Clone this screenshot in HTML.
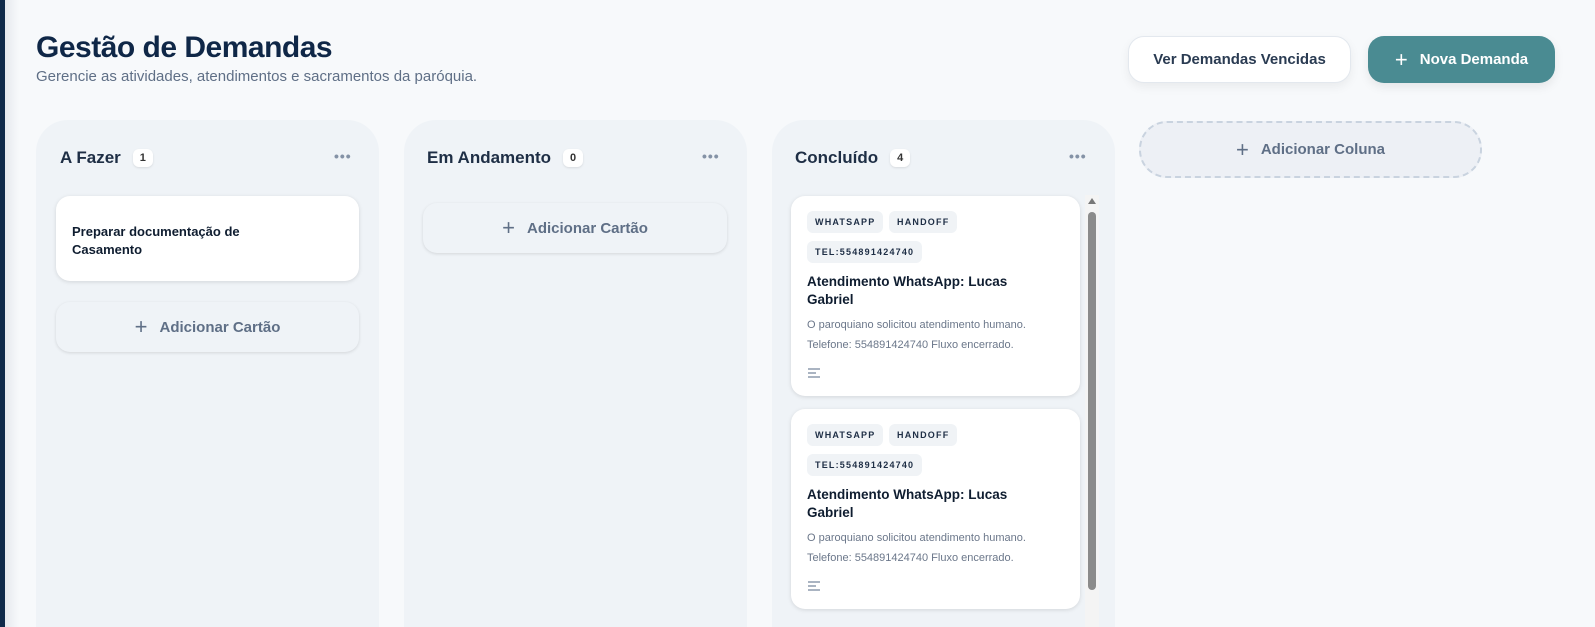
<!DOCTYPE html>
<html style="width:1595px;height:627px;overflow:hidden"><head><meta charset="utf-8"><style>
*{box-sizing:border-box;margin:0;padding:0}
body{width:1595px;height:627px;overflow:hidden;background:#f7f9fb;font-family:"Liberation Sans",sans-serif;position:relative;color:#0f2747}
.bar{position:absolute;left:0;top:0;width:5px;height:627px;background:#0f2a4a}
.shade{position:absolute;left:5px;top:0;width:14px;height:627px;background:linear-gradient(90deg,#e6e9ee,#f7f9fb)}
h1{position:absolute;left:36px;top:31px;font-size:30px;font-weight:700;letter-spacing:-0.5px;color:#0f2747}
.sub{position:absolute;left:36px;top:68px;font-size:15px;color:#5f6f86}
.btn{position:absolute;top:36px;height:47px;border-radius:16px;font-size:15px;font-weight:700;display:flex;align-items:center;justify-content:center}
.b1{left:1128px;width:223px;background:#fff;border:1px solid #e3e8ee;color:#2a3b52;box-shadow:0 4px 10px rgba(0,0,0,.06)}
.b2{left:1368px;width:187px;background:#4a8b92;color:#fff;box-shadow:0 4px 10px rgba(0,0,0,.08)}
.col{position:absolute;top:120px;width:343px;height:507px;background:#eff3f7;border-radius:32px 32px 0 0}
.ch{position:absolute;top:148px;font-size:17px;font-weight:700;color:#1e2e45;display:flex;align-items:center}
.badge{display:inline-block;margin-left:12px;background:#fff;border-radius:6px;font-size:11px;padding:3px 7px;color:#333;box-shadow:0 1px 2px rgba(0,0,0,.1)}
.dots{position:absolute;top:148px;font-size:14px;color:#8492a6;letter-spacing:1px;font-weight:700}
.card{position:absolute;background:#fff;border-radius:14px;box-shadow:0 1px 4px rgba(0,0,0,.12)}
.add{position:absolute;border-radius:14px;background:#eff3f7;box-shadow:0 1px 3px rgba(0,0,0,.12);display:flex;align-items:center;justify-content:center;font-size:15px;font-weight:700;color:#5f6f86}
.add span{font-size:22px;font-weight:300;margin-right:12px}
.tag{position:absolute;background:#f0f3f6;border-radius:6px;font-size:9px;font-weight:700;letter-spacing:1.2px;padding:6px 8px;color:#1e2e45}
.ct{position:absolute;left:16px;font-size:13.5px;font-weight:700;line-height:18px;color:#0f1d30}
.cd{position:absolute;left:16px;font-size:11px;line-height:20px;color:#6b778a}
.ic{position:absolute;left:17px;width:12px}
.ic i{display:block;height:1.5px;background:#aab4c2;margin-bottom:2.5px}
</style></head><body>
<div class="bar"></div><div class="shade"></div>
<h1>Gestão de Demandas</h1>
<div class="sub">Gerencie as atividades, atendimentos e sacramentos da paróquia.</div>
<div class="btn b1">Ver Demandas Vencidas</div>
<div class="btn b2"><span style="font-size:22px;font-weight:300;margin-right:12px">+</span>Nova Demanda</div>

<div class="col" style="left:36px"></div>
<div class="col" style="left:404px"></div>
<div class="col" style="left:772px"></div>
<div style="position:absolute;left:1139px;top:121px;width:343px;height:57px;border:2px dashed #c9d3df;border-radius:28px;background:#edf0f5;display:flex;align-items:center;justify-content:center;font-size:15px;font-weight:700;color:#5f6f86"><span style="font-size:22px;font-weight:300;margin-right:12px">+</span>Adicionar Coluna</div>

<div class="ch" style="left:60px">A Fazer<span class="badge">1</span></div>
<div class="dots" style="left:334px">•••</div>
<div class="ch" style="left:427px">Em Andamento<span class="badge">0</span></div>
<div class="dots" style="left:702px">•••</div>
<div class="ch" style="left:795px">Concluído<span class="badge">4</span></div>
<div class="dots" style="left:1069px">•••</div>

<div class="card" style="left:56px;top:196px;width:303px;height:85px"><div class="ct" style="top:27px;font-size:13px">Preparar documentação de<br>Casamento</div></div>
<div class="add" style="left:56px;top:302px;width:303px;height:50px"><span>+</span>Adicionar Cartão</div>
<div class="add" style="left:423px;top:203px;width:304px;height:50px"><span>+</span>Adicionar Cartão</div>

<div class="card" style="left:791px;top:196px;width:289px;height:200px">
<div class="tag" style="left:16px;top:15px">WHATSAPP</div><div class="tag" style="left:98px;top:15px">HANDOFF</div>
<div class="tag" style="left:16px;top:45px">TEL:554891424740</div>
<div class="ct" style="top:77px">Atendimento WhatsApp: Lucas<br>Gabriel</div>
<div class="cd" style="top:119px">O paroquiano solicitou atendimento humano.<br>Telefone: 554891424740 Fluxo encerrado.</div>
<div class="ic" style="top:172px"><i></i><i style="width:8px"></i><i></i></div>
</div>
<div class="card" style="left:791px;top:409px;width:289px;height:200px">
<div class="tag" style="left:16px;top:15px">WHATSAPP</div><div class="tag" style="left:98px;top:15px">HANDOFF</div>
<div class="tag" style="left:16px;top:45px">TEL:554891424740</div>
<div class="ct" style="top:77px">Atendimento WhatsApp: Lucas<br>Gabriel</div>
<div class="cd" style="top:119px">O paroquiano solicitou atendimento humano.<br>Telefone: 554891424740 Fluxo encerrado.</div>
<div class="ic" style="top:172px"><i></i><i style="width:8px"></i><i></i></div>
</div>
<div style="position:absolute;left:1085px;top:195px;width:14px;height:432px;background:#f4f4f4"></div>
<div style="position:absolute;left:1088px;top:198px;width:0;height:0;border-left:4px solid transparent;border-right:4px solid transparent;border-bottom:6px solid #777"></div>
<div style="position:absolute;left:1088px;top:212px;width:8px;height:378px;background:#8b8b8b;border-radius:4px"></div>
</body></html>
